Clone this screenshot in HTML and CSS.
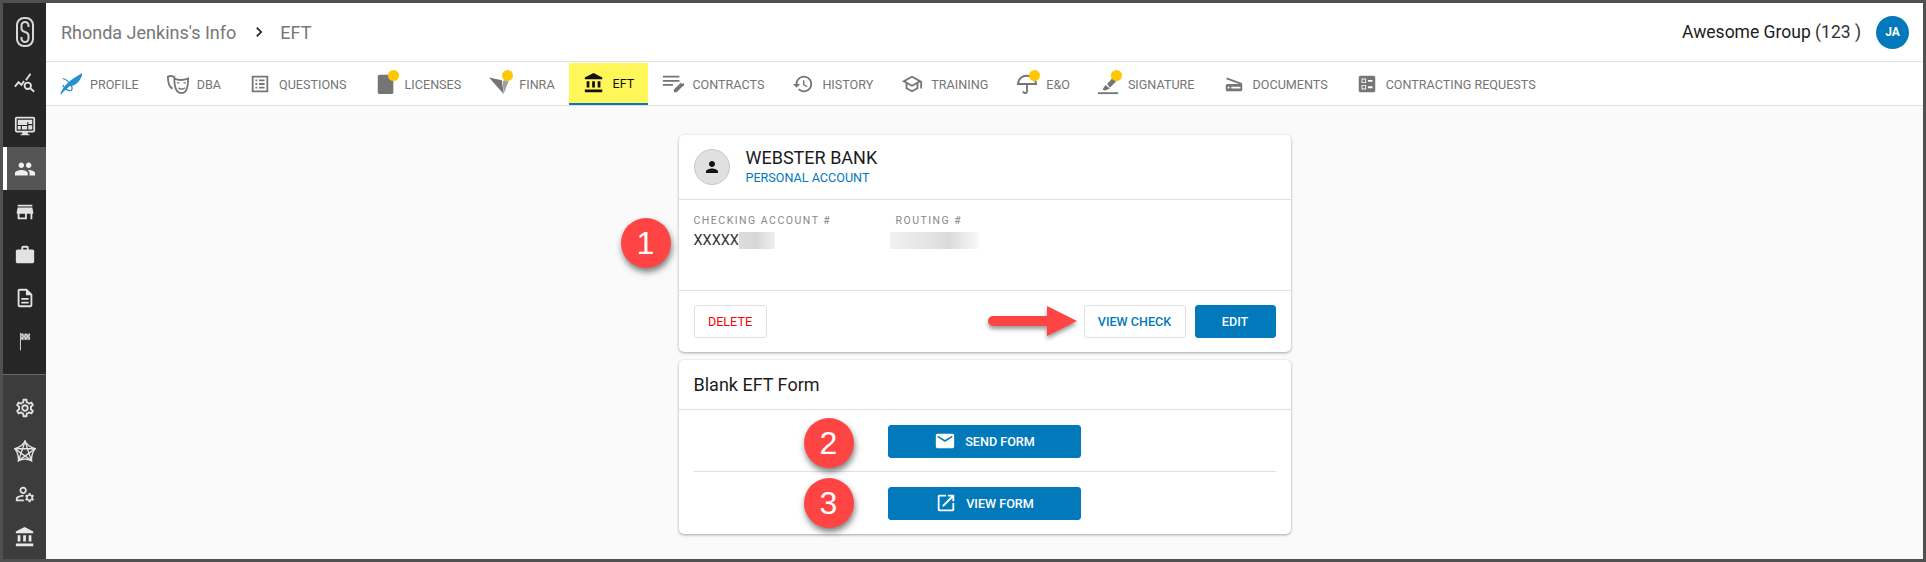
FILE: index.html
```html
<!DOCTYPE html>
<html lang="en">
<head>
  <meta charset="UTF-8">
  <title>Rhonda Jenkins's Info - EFT</title>
  <meta name="viewport" content="width=device-width, initial-scale=1.0">
  <link rel="stylesheet" href="styles.css">
</head>
<body>
  <div class="app">

    <!-- Sidebar -->
    <nav class="sidebar">
      <div class="side-top">
        <div class="side-logo">
          <svg width="20" height="30" viewBox="0 0 20 30" fill="none" stroke="#d8d8d8"><rect x="2" y="1" width="16" height="28" rx="7" stroke-width="2"/><path d="M13.500 10V8.500a3.500 3.500 0 0 0-7 0v3c0 2 1.500 3 3.500 3.500s3.500 1.500 3.500 3.500v3a3.500 3.500 0 0 1-7 0V20" stroke-width="2"/></svg>
        </div>
        <div class="side-item">
          <svg class="ic-side" viewBox="0 0 24 24" fill="none" stroke="#e2e2e2" stroke-width="2"><path d="M1 16l4-5 3 3 3-4"/><path d="M13 9l5-7"/><circle cx="15" cy="15" r="3.500"/><path d="M17.500 17.500L22 21.500"/></svg>
        </div>
        <div class="side-item">
          <svg class="ic-side" viewBox="0 0 24 24"><path fill="#e2e2e2" d="M3 2h18c1.100 0 2 .9 2 2v13c0 1.100-.9 2-2 2h-6v2h2v1H7v-1h2v-2H3c-1.100 0-2-.9-2-2V4c0-1.100.9-2 2-2z"/><path fill="none" stroke="#262626" stroke-width="1.200" d="M3.500 4.500h17v12h-17zM3.500 11.500h11.500M15 7.500v9M15 10.500h5.500M8 11.500v5"/></svg>
        </div>
        <div class="side-item active">
          <svg class="ic-side" viewBox="0 0 24 24" fill="#f0f0f0"><path d="M16 11c1.660 0 2.990-1.340 2.990-3S17.660 5 16 5c-1.660 0-3 1.340-3 3s1.340 3 3 3zm-8 0c1.660 0 2.990-1.340 2.990-3S9.660 5 8 5C6.340 5 5 6.340 5 8s1.340 3 3 3zm0 2c-2.330 0-7 1.170-7 3.500V19h14v-2.500c0-2.330-4.670-3.500-7-3.500zm8 0c-.29 0-.62.02-.97.05 1.160.84 1.970 1.970 1.970 3.450V19h6v-2.500c0-2.330-4.670-3.500-7-3.500z"/></svg>
        </div>
        <div class="side-item">
          <svg class="ic-side" viewBox="0 0 24 24" fill="#e2e2e2"><path d="M20 4H4v2h16V4zm1 10v-2l-1-5H4l-1 5v2h1v6h10v-6h4v6h2v-6h1zm-9 4H6v-4h6v4z"/></svg>
        </div>
        <div class="side-item">
          <svg class="ic-side" viewBox="0 0 24 24" fill="#e2e2e2"><path d="M20 6h-4V4c0-1.110-.89-2-2-2h-4c-1.110 0-2 .89-2 2v2H4c-1.110 0-1.990.89-1.990 2L2 19c0 1.110.89 2 2 2h16c1.110 0 2-.89 2-2V8c0-1.110-.89-2-2-2zm-6 0h-4V4h4v2z"/></svg>
        </div>
        <div class="side-item">
          <svg class="ic-side" viewBox="0 0 24 24" fill="#e2e2e2"><path d="M8 16h8v2H8zm0-4h8v2H8zm6-10H6c-1.100 0-2 .9-2 2v16c0 1.100.89 2 1.990 2H18c1.100 0 2-.9 2-2V8l-6-6zm4 18H6V4h7v5h5v11z"/></svg>
        </div>
        <div class="side-item">
          <svg class="ic-side" viewBox="0 0 24 24" fill="#e2e2e2"><path d="M6.500 3h1v19h-1z"/><path d="M7.500 4h10v7h-10z" fill="#8f8f8f"/><path d="M8 4h2v2H8zm4 0h2v2h-2zm4 0h1.500v2H16zM10 6h2v2h-2zm4 0h2v2h-2zM8 8h2v2H8zm4 0h2v2h-2zm4 0h1.500v2H16z"/></svg>
        </div>
      </div>
      <div class="side-bottom">
        <div class="side-item">
          <svg class="ic-side" viewBox="0 0 24 24" fill="#e2e2e2"><path d="M19.430 12.980c.04-.32.07-.64.07-.98 0-.34-.03-.66-.07-.98l2.110-1.650c.19-.15.24-.42.12-.64l-2-3.460c-.09-.16-.26-.25-.44-.25-.06 0-.12.01-.17.03l-2.490 1c-.52-.4-1.080-.73-1.690-.98l-.38-2.650C14.460 2.180 14.250 2 14 2h-4c-.25 0-.46.18-.49.42l-.38 2.650c-.61.25-1.170.59-1.690.98l-2.490-1c-.06-.02-.12-.03-.18-.03-.17 0-.34.09-.43.25l-2 3.460c-.13.22-.07.49.12.64l2.110 1.650c-.04.32-.07.65-.07.98 0 .33.03.66.07.98l-2.110 1.650c-.19.15-.24.42-.12.64l2 3.460c.09.16.26.25.44.25.06 0 .12-.01.17-.03l2.490-1c.52.4 1.080.73 1.690.98l.38 2.650c.03.24.24.42.49.42h4c.25 0 .46-.18.49-.42l.38-2.650c.61-.25 1.170-.59 1.690-.98l2.490 1c.06.02.12.03.18.03.17 0 .34-.09.43-.25l2-3.460c.12-.22.07-.49-.12-.64l-2.110-1.650zm-1.980-1.710c.04.31.05.52.05.73 0 .21-.02.43-.05.73l-.14 1.130.89.7 1.080.84-.7 1.210-1.270-.51-1.040-.42-.9.68c-.43.32-.84.56-1.250.73l-1.060.43-.16 1.130-.2 1.350h-1.400l-.19-1.350-.16-1.130-1.060-.43c-.43-.18-.83-.41-1.230-.71l-.91-.7-1.060.43-1.270.51-.7-1.210 1.080-.84.89-.7-.14-1.130c-.03-.31-.05-.54-.05-.74s.02-.43.05-.73l.14-1.130-.89-.7-1.080-.84.7-1.210 1.270.51 1.040.42.9-.68c.43-.32.84-.56 1.250-.73l1.060-.43.16-1.130.2-1.350h1.390l.19 1.350.16 1.130 1.060.43c.43.18.83.41 1.230.71l.91.7 1.060-.43 1.270-.51.7 1.210-1.070.85-.89.7.14 1.130zM12 8c-2.210 0-4 1.790-4 4s1.790 4 4 4 4-1.790 4-4-1.790-4-4-4zm0 6c-1.100 0-2-.9-2-2s.9-2 2-2 2 .9 2 2-.9 2-2 2z"/></svg>
        </div>
        <div class="side-item">
          <svg class="ic-side" viewBox="0 0 24 24" fill="none" stroke="#e2e2e2" stroke-width="1.500"><path d="M12 1.500Q15 7 23 9.500Q19 15 19 22.500Q12 19 5 22.500Q5 15 1 9.500Q9 7 12 1.500z"/><path d="M12 1.500L19 22.500L1 9.500H23L5 22.500z"/></svg>
        </div>
        <div class="side-item">
          <svg class="ic-side" viewBox="0 0 24 24" fill="#e2e2e2"><path d="M4 18v-.65c0-.34.16-.66.41-.81C6.100 15.530 8.030 15 10 15c.03 0 .05 0 .08.01.1-.7.3-1.370.59-1.980-.22-.02-.44-.03-.67-.03-2.420 0-4.680.67-6.610 1.820-.88.52-1.390 1.500-1.390 2.530V20h9.260c-.42-.6-.75-1.280-.97-2H4zM10 12c2.210 0 4-1.790 4-4s-1.790-4-4-4-4 1.790-4 4 1.790 4 4 4zm0-6c1.100 0 2 .9 2 2s-.9 2-2 2-2-.9-2-2 .9-2 2-2zM20.750 16c0-.22-.03-.42-.06-.63l1.140-1.010-1-1.730-1.450.49c-.32-.27-.68-.48-1.080-.63L18 11h-2l-.3 1.490c-.4.15-.76.36-1.080.63l-1.450-.49-1 1.730 1.140 1.010c-.03.21-.06.41-.06.63s.03.42.06.63l-1.140 1.010 1 1.730 1.450-.49c.32.27.68.48 1.080.63L16 21h2l.3-1.490c.4-.15.76-.36 1.080-.63l1.450.49 1-1.730-1.140-1.010c.03-.21.06-.41.06-.63zM17 18c-1.100 0-2-.9-2-2s.9-2 2-2 2 .9 2 2-.9 2-2 2z"/></svg>
        </div>
        <div class="side-item">
          <svg class="ic-side" viewBox="0 0 24 24" fill="#e8e8e8"><path d="M4 10v7h3v-7H4zm6 0v7h3v-7h-3zM2 22h19v-3H2v3zm14-12v7h3v-7h-3zm-4.500-9L2 6v2h19V6l-9.500-5z"/></svg>
        </div>
      </div>
    </nav>

    <div class="main">

      <!-- Top bar -->
      <header class="topbar">
        <div class="crumbs">
          <span>Rhonda Jenkins's Info</span>
          <svg class="crumb-sep" viewBox="0 0 24 24" fill="#1d2433"><path d="M8.590 16.590L13.170 12 8.590 7.410 10 6l6 6-6 6z"/></svg>
          <span>EFT</span>
        </div>
        <div class="group">
          <span class="group-name">Awesome Group <span class="group-id">(123 )</span></span>
          <span class="avatar">JA</span>
        </div>
      </header>

      <!-- Tabs -->
      <div class="tabs">
        <div class="tab">
          <span class="tab-icon"><svg viewBox="0 0 24 24" fill="none" stroke="#2a8fd0" stroke-width="1.400"><path d="M1 23C5 12 14 7 24 1c-2 6-6 12-13 13" fill="#2a8fd0"/><path d="M3 6c4 1 8 5 10 9 1 3-1 5-4 4-3-1-5-4-6-6"/></svg></span>
          PROFILE
        </div>
        <div class="tab">
          <span class="tab-icon"><svg viewBox="0 0 24 24" fill="none" stroke="#757575" stroke-width="2"><path d="M9 5C6 3 3 3 1 4c0 6 1 11 5 13"/><path d="M8 6c4 2 10 2 15 0 0 8-1 16-7 16S8 14 8 6z"/><path d="M11 10.500l2.500.5M18 11l2.500-.5M12.500 16c2 2 5 2 7 0" stroke-width="1.500"/></svg></span>
          DBA
        </div>
        <div class="tab">
          <span class="tab-icon"><svg viewBox="0 0 24 24" fill="#757575"><path d="M19 5v14H5V5h14m1.100-2H3.900c-.5 0-.9.4-.9.9v16.200c0 .4.4.9.9.9h16.200c.4 0 .9-.5.9-.9V3.900c0-.5-.5-.9-.9-.9zM11 7h6v2h-6V7zm0 4h6v2h-6v-2zm0 4h6v2h-6zM7 7h2v2H7zm0 4h2v2H7zm0 4h2v2H7z"/></svg></span>
          QUESTIONS
        </div>
        <div class="tab">
          <span class="tab-icon"><svg viewBox="0 0 24 24" fill="#757575"><path d="M5 2h10l5 5v14c0 1-.8 2-2 2H5c-1.200 0-2-1-2-2V4c0-1 .8-2 2-2z"/></svg><i class="dot"></i></span>
          LICENSES
        </div>
        <div class="tab">
          <span class="tab-icon"><svg viewBox="0 0 24 24" fill="#757575"><path d="M0 5l14 3 2 15z"/><path d="M16 23l-1-14 8-4z" fill="#a0a0a0"/></svg><i class="dot"></i></span>
          FINRA
        </div>
        <div class="tab active">
          <span class="tab-icon"><svg viewBox="0 0 24 24" fill="#111"><path d="M4 10v7h3v-7H4zm6 0v7h3v-7h-3zM2 22h19v-3H2v3zm14-12v7h3v-7h-3zm-4.500-9L2 6v2h19V6l-9.500-5z"/></svg></span>
          EFT
        </div>
        <div class="tab">
          <span class="tab-icon"><svg viewBox="0 0 24 24" fill="#757575"><path d="M1 3h18v2H1zm0 4.500h18v2H1zm0 4.500h11v2H1zm12 9v-3l7.500-7.500 3 3L16 21zM21.500 12.500l1-1c.4-.4 1-.4 1.400 0l.6.6v1.400l-1 1z"/></svg></span>
          CONTRACTS
        </div>
        <div class="tab">
          <span class="tab-icon"><svg viewBox="0 0 24 24" fill="#757575"><path d="M13 3c-4.970 0-9 4.030-9 9H1l3.890 3.890.07.14L9 12H6c0-3.870 3.130-7 7-7s7 3.130 7 7-3.130 7-7 7c-1.930 0-3.680-.79-4.940-2.060l-1.420 1.420C8.270 19.990 10.510 21 13 21c4.970 0 9-4.030 9-9s-4.030-9-9-9zm-1 5v5l4.280 2.540.72-1.210-3.500-2.080V8H12z"/></svg></span>
          HISTORY
        </div>
        <div class="tab">
          <span class="tab-icon"><svg viewBox="0 0 24 24" fill="#757575"><path d="M12 3L1 9l4 2.180v6L12 21l7-3.820v-6l2-1.090V17h2V9L12 3zm6.820 6L12 12.720 5.180 9 12 5.280 18.820 9zM17 15.990l-5 2.730-5-2.730v-3.720L12 15l5-2.730v3.720z"/></svg></span>
          TRAINING
        </div>
        <div class="tab">
          <span class="tab-icon"><svg viewBox="0 0 24 24" fill="none" stroke="#757575" stroke-width="2"><path d="M2 12C3 6 7 3 12 3s9 3 10 9z"/><path d="M12 12v8c0 2.500-4 2.500-4 0"/></svg><i class="dot"></i></span>
          E&amp;O
        </div>
        <div class="tab">
          <span class="tab-icon"><svg viewBox="0 0 24 24" fill="#757575"><path d="M0 21h22v2H0z"/><path d="M5 18l3-5 5 4-5 2z"/><path d="M10 12l7-8 4 4-8 8z"/></svg><i class="dot"></i></span>
          SIGNATURE
        </div>
        <div class="tab">
          <span class="tab-icon"><svg viewBox="0 0 24 24" fill="#757575"><path d="M19.800 10.700L4.200 5l-.7 1.900L17.600 12H5c-1.100 0-2 .9-2 2v4c0 1.100.9 2 2 2h14c1.100 0 2-.9 2-2v-5.500c0-.8-.5-1.600-1.200-1.800zM7 17H5v-2h2v2zm12 0H9v-2h10v2z"/></svg></span>
          DOCUMENTS
        </div>
        <div class="tab">
          <span class="tab-icon"><svg viewBox="0 0 24 24" fill="#757575"><path d="M13 9.500h5v-2h-5v2zm0 7h5v-2h-5v2zm6 4.500H5c-1.100 0-2-.9-2-2V5c0-1.100.9-2 2-2h14c1.100 0 2 .9 2 2v14c0 1.100-.9 2-2 2zM6 11h5V6H6v5zm1-4h3v3H7V7zM6 18h5v-5H6v5zm1-4h3v3H7v-3z"/></svg></span>
          CONTRACTING REQUESTS
        </div>
      </div>

      <!-- Content -->
      <div class="content">

        <div class="card">
          <span class="callout callout-1">1</span>
          <svg class="red-arrow" width="96" height="46" viewBox="0 0 96 46">
            <path d="M8 19h54V9l30 15-30 15V29H8a5 5 0 0 1 0-10z" fill="#ff4444"/>
          </svg>

          <div class="bank-head">
            <span class="bank-avatar"><svg viewBox="0 0 24 24" fill="#111"><path d="M12 12c2.210 0 4-1.790 4-4s-1.790-4-4-4-4 1.790-4 4 1.790 4 4 4zm0 2c-2.670 0-8 1.340-8 4v2h16v-2c0-2.660-5.330-4-8-4z"/></svg></span>
            <div>
              <div class="bank-name">WEBSTER BANK</div>
              <div class="bank-type">PERSONAL ACCOUNT</div>
            </div>
          </div>

          <div class="bank-body">
            <div class="field">
              <div class="field-label">CHECKING ACCOUNT #</div>
              <div class="field-value">XXXXX<span class="blur blur-short"></span></div>
            </div>
            <div class="field field-routing">
              <div class="field-label">ROUTING #</div>
              <div class="field-value"><span class="blur blur-long"></span></div>
            </div>
          </div>

          <div class="bank-foot">
            <button class="btn btn-delete">DELETE</button>
            <div class="foot-right">
              <button class="btn btn-outline">VIEW CHECK</button>
              <button class="btn btn-primary btn-edit">EDIT</button>
            </div>
          </div>
        </div>

        <div class="card">
          <span class="callout callout-2">2</span>
          <span class="callout callout-3">3</span>

          <div class="form-head">Blank EFT Form</div>
          <div class="form-row form-row-line">
            <button class="btn btn-primary btn-form">
              <svg viewBox="0 0 24 24" fill="#fff"><path d="M20 4H4c-1.100 0-1.990.9-1.990 2L2 18c0 1.100.9 2 2 2h16c1.100 0 2-.9 2-2V6c0-1.100-.9-2-2-2zm0 4l-8 5-8-5V6l8 5 8-5v2z"/></svg>
              SEND FORM
            </button>
          </div>
          <div class="form-row">
            <button class="btn btn-primary btn-form">
              <svg viewBox="0 0 24 24" fill="#fff"><path d="M19 19H5V5h7V3H5c-1.110 0-2 .9-2 2v14c0 1.100.89 2 2 2h14c1.100 0 2-.9 2-2v-7h-2v7zM14 3v2h3.590l-9.830 9.830 1.410 1.410L19 6.410V10h2V3h-7z"/></svg>
              VIEW FORM
            </button>
          </div>
        </div>

      </div>
    </div>
  </div>
</body>
</html>
```

FILE: styles.css
```css
:root {
  --blue: #0279bb;
  --line: #e0e0e0;
  --grey: #757575;
  --red: #ff4444;
}

* {
  box-sizing: border-box;
}

body {
  margin: 0;
  font-family: Roboto, sans-serif;
  color: #1c1c1c;
  background: #505050;
}

.app {
  display: flex;
  height: 100vh;
  border: 3px solid #505050;
  overflow: hidden;
}

/* Sidebar */
.sidebar {
  width: 43px;
  flex-shrink: 0;
  display: flex;
  flex-direction: column;
  background: #3c3c3c;
}

.side-top {
  background: #262626;
  padding-bottom: 12px;
  border-bottom: 1px solid #6a6a6a;
}

.side-bottom {
  padding-top: 11px;
}

.side-logo {
  height: 58px;
  display: flex;
  align-items: center;
  justify-content: center;
}

.side-item {
  height: 43px;
  display: flex;
  align-items: center;
  justify-content: center;
}

.side-item.active {
  background: #555;
  border-left: 4px solid #fff;
  padding-right: 4px;
}

.ic-side {
  width: 22px;
  height: 22px;
}

/* Top bar */
.main {
  flex: 1;
  display: flex;
  flex-direction: column;
  min-width: 0;
  background: #fafafa;
}

.topbar {
  height: 59px;
  flex-shrink: 0;
  display: flex;
  align-items: center;
  justify-content: space-between;
  padding: 0 14px 0 15px;
  background: #fff;
  border-bottom: 1px solid var(--line);
}

.crumbs {
  display: flex;
  align-items: center;
  font-size: 18px;
  color: #777;
}

.crumb-sep {
  width: 20px;
  height: 20px;
  margin: 0 11px 0 13px;
}

.group {
  display: flex;
  align-items: center;
  gap: 15px;
}

.group-name {
  font-size: 17.5px;
  color: #1c1c1c;
}

.group-id {
  color: #333;
}

.avatar {
  width: 33px;
  height: 33px;
  border-radius: 50%;
  display: flex;
  align-items: center;
  justify-content: center;
  background: var(--blue);
  color: #fff;
  font-size: 12px;
  font-weight: 700;
}

/* Tabs */
.tabs {
  height: 44px;
  flex-shrink: 0;
  display: flex;
  background: #fff;
  border-bottom: 1px solid var(--line);
  padding-top: 1px;
}

.tab {
  display: flex;
  align-items: center;
  gap: 9px;
  height: 42px;
  padding: 0 14px 0 15px;
  font-size: 12.6px;
  color: var(--grey);
  white-space: nowrap;
}

.tab.active {
  background: #fff65a;
  border-bottom: 2px solid var(--blue);
  color: #111;
}

.tab-icon {
  position: relative;
  width: 20px;
  height: 20px;
  flex-shrink: 0;
}

.tab-icon svg {
  width: 22px;
  height: 22px;
  margin: -1px;
  display: block;
}

.dot {
  position: absolute;
  top: -4px;
  right: -3px;
  width: 11px;
  height: 11px;
  border-radius: 50%;
  background: #ffc800;
}

/* Cards */
.content {
  flex: 1;
  display: flex;
  flex-direction: column;
  align-items: center;
  gap: 8px;
  padding-top: 29px;
}

.card {
  position: relative;
  width: 612px;
  background: #fff;
  border-radius: 5px;
  box-shadow: 0 1px 3px rgba(0, 0, 0, 0.35);
}

.bank-head {
  height: 65px;
  display: flex;
  align-items: center;
  gap: 16px;
  padding: 0 15px;
  border-bottom: 1px solid var(--line);
}

.bank-avatar {
  width: 36px;
  height: 36px;
  border-radius: 50%;
  display: flex;
  align-items: center;
  justify-content: center;
  background: #e0e0e0;
  border: 1px solid #c8c8c8;
}

.bank-avatar svg {
  width: 18px;
  height: 18px;
}

.bank-name {
  font-size: 18px;
  line-height: 22px;
}

.bank-type {
  font-size: 12.6px;
  line-height: 18px;
  color: var(--blue);
}

.bank-body {
  height: 91px;
  display: flex;
  padding: 13px 15px 0;
  border-bottom: 1px solid var(--line);
}

.field {
  width: 202px;
}

.field-label {
  font-size: 10.5px;
  letter-spacing: 1.5px;
  line-height: 16px;
  color: #888;
}

.field-value {
  display: flex;
  align-items: center;
  height: 18px;
  margin-top: 2px;
  font-size: 14.5px;
  color: #333;
}

.field-routing .field-value {
  margin-left: -6px;
}

.blur {
  display: inline-block;
  height: 17px;
}

.blur-short {
  width: 36px;
  background: linear-gradient(90deg, #dcdcdc, #d8d8d8 50%, #efefef);
}

.blur-long {
  width: 90px;
  background: linear-gradient(90deg, #f0f0f0, #e2e2e2 50%, #dadada 65%, #fbfbfb);
}

.bank-foot {
  height: 61px;
  display: flex;
  align-items: center;
  justify-content: space-between;
  padding: 0 15px;
}

.foot-right {
  display: flex;
  gap: 9px;
}

.btn {
  height: 33px;
  display: flex;
  align-items: center;
  justify-content: center;
  font-family: Roboto, sans-serif;
  font-size: 12.6px;
  font-weight: 500;
  border-radius: 3px;
  border: 1px solid var(--line);
  background: #fff;
}

.btn-delete {
  width: 73px;
  color: #f00;
  font-weight: 400;
}

.btn-outline {
  width: 102px;
  color: var(--blue);
}

.btn-primary {
  background: var(--blue);
  border-color: var(--blue);
  color: #fff;
}

.btn-edit {
  width: 81px;
}

.form-head {
  height: 50px;
  display: flex;
  align-items: center;
  padding: 0 15px;
  font-size: 18px;
  border-bottom: 1px solid var(--line);
}

.form-row {
  position: relative;
  height: 62px;
  display: flex;
  align-items: center;
  justify-content: center;
}

.form-row-line::after {
  content: "";
  position: absolute;
  left: 15px;
  right: 15px;
  bottom: 0;
  height: 1px;
  background: var(--line);
}

.btn-form {
  width: 193px;
  gap: 9px;
}

.btn-form svg {
  width: 22px;
  height: 22px;
}

/* Annotations over the screenshot */
.callout {
  position: absolute;
  z-index: 2;
  width: 50px;
  height: 50px;
  border-radius: 50%;
  display: flex;
  align-items: center;
  justify-content: center;
  background: var(--red);
  color: #fff;
  font-family: "Liberation Sans", sans-serif;
  font-size: 32px;
  box-shadow: 1px 4px 6px rgba(0, 0, 0, 0.5);
}

.callout-1 {
  left: -58px;
  top: 83px;
}

.callout-2 {
  left: 125px;
  top: 58px;
}

.callout-3 {
  left: 125px;
  top: 118px;
}

.red-arrow {
  position: absolute;
  z-index: 2;
  left: 306px;
  top: 162px;
  filter: drop-shadow(0 3px 2px rgba(0, 0, 0, 0.4));
}
```
